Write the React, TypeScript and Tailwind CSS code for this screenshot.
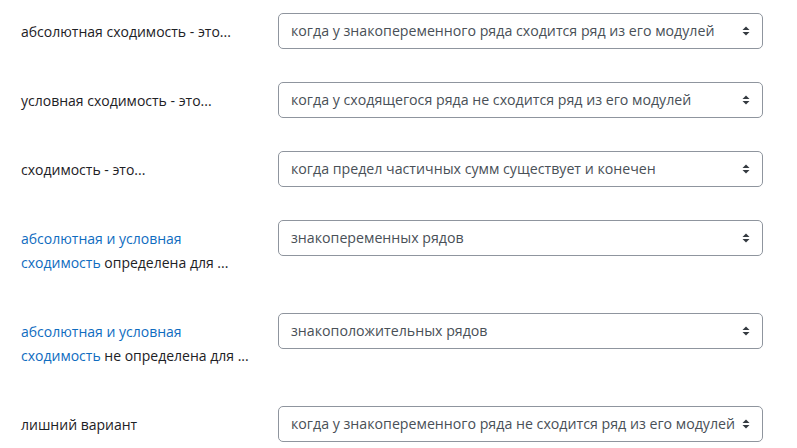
import { ReactNode } from 'react'

type Row = {
  label: ReactNode
  value: string
}

const rows: Row[] = [
  { label: 'абсолютная сходимость - это...', value: 'когда у знакопеременного ряда сходится ряд из его модулей' },
  { label: 'условная сходимость - это...', value: 'когда у сходящегося ряда не сходится ряд из его модулей' },
  { label: 'сходимость - это...', value: 'когда предел частичных сумм существует и конечен' },
  {
    label: (
      <>
        <a href="#" className="text-[#0f6cbf]">абсолютная и условная</a>
        <br />
        <a href="#" className="text-[#0f6cbf]">сходимость</a> определена для ...
      </>
    ),
    value: 'знакопеременных рядов',
  },
  {
    label: (
      <>
        <a href="#" className="text-[#0f6cbf]">абсолютная и условная</a>
        <br />
        <a href="#" className="text-[#0f6cbf]">сходимость</a> не определена для ...
      </>
    ),
    value: 'знакоположительных рядов',
  },
  { label: 'лишний вариант', value: 'когда у знакопеременного ряда не сходится ряд из его модулей' },
]

function Arrows() {
  return (
    <svg width="8" height="10" viewBox="0 0 8 10" className="shrink-0">
      <path d="M4 0.5 L7.5 4 H0.5 Z" fill="#343a40" />
      <path d="M4 9.5 L7.5 6 H0.5 Z" fill="#343a40" />
    </svg>
  )
}

export default function App() {
  return (
    <main className="min-h-screen bg-white pt-[13px] pl-[21px] font-['Open_Sans',sans-serif] text-[14px]">
      {rows.map((row, i) => (
        <div key={i} className="flex items-start mb-[32px]">
          <div className="w-[257px] pt-[7px] pb-[6px] leading-6 text-[#1d2125] pr-6">{row.label}</div>
          <div className="w-[485px] h-[36px] flex items-center justify-between border border-[#8f959e] rounded-[5px] pl-[12px] pr-[12px] text-[14.2px] text-[#495057] whitespace-nowrap">
            <span>{row.value}</span>
            <Arrows />
          </div>
        </div>
      ))}
    </main>
  )
}
